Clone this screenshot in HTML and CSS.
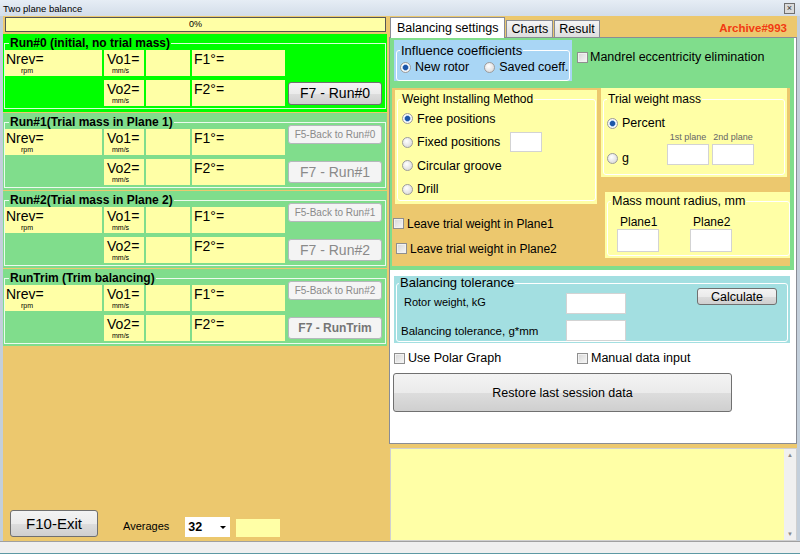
FILE: index.html
```html
<!DOCTYPE HTML>
<html>
<head>
    <meta charset="utf-8">
    <link rel="stylesheet" href="styles.css">
</head>
<body>
<div class="window">
    <div class="titlebar">
        <span>Two plane balance</span>
        <span class="close">×</span>
    </div>

    <div class="main">
        <div class="left">
            <div class="progress">0%</div>

            <div class="run run-current">
                <fieldset>
                    <legend>Run#0 (initial, no trial mass)</legend>
                    <div class="run-grid">
                        <div class="cell nrev">Nrev=<small>rpm</small></div>
                        <div class="cell amp">Vo1=<small>mm/s</small></div>
                        <div class="cell"></div>
                        <div class="cell phase">F1°=</div>
                        <div class="blank"></div>
                        <div class="blank"></div>
                        <div class="cell amp">Vo2=<small>mm/s</small></div>
                        <div class="cell"></div>
                        <div class="cell phase">F2°=</div>
                        <button class="btn btn-run">F7 - Run#0</button>
                    </div>
                </fieldset>
            </div>

            <div class="run">
                <fieldset>
                    <legend>Run#1(Trial mass in Plane 1)</legend>
                    <div class="run-grid">
                        <div class="cell nrev">Nrev=<small>rpm</small></div>
                        <div class="cell amp">Vo1=<small>mm/s</small></div>
                        <div class="cell"></div>
                        <div class="cell phase">F1°=</div>
                        <button class="btn btn-off btn-back">F5-Back to Run#0</button>
                        <div class="blank"></div>
                        <div class="cell amp">Vo2=<small>mm/s</small></div>
                        <div class="cell"></div>
                        <div class="cell phase">F2°=</div>
                        <button class="btn btn-off btn-run">F7 - Run#1</button>
                    </div>
                </fieldset>
            </div>

            <div class="run">
                <fieldset>
                    <legend>Run#2(Trial mass in Plane 2)</legend>
                    <div class="run-grid">
                        <div class="cell nrev">Nrev=<small>rpm</small></div>
                        <div class="cell amp">Vo1=<small>mm/s</small></div>
                        <div class="cell"></div>
                        <div class="cell phase">F1°=</div>
                        <button class="btn btn-off btn-back">F5-Back to Run#1</button>
                        <div class="blank"></div>
                        <div class="cell amp">Vo2=<small>mm/s</small></div>
                        <div class="cell"></div>
                        <div class="cell phase">F2°=</div>
                        <button class="btn btn-off btn-run">F7 - Run#2</button>
                    </div>
                </fieldset>
            </div>

            <div class="run">
                <fieldset>
                    <legend>RunTrim (Trim balancing)</legend>
                    <div class="run-grid">
                        <div class="cell nrev">Nrev=<small>rpm</small></div>
                        <div class="cell amp">Vo1=<small>mm/s</small></div>
                        <div class="cell"></div>
                        <div class="cell phase">F1°=</div>
                        <button class="btn btn-off btn-back">F5-Back to Run#2</button>
                        <div class="blank"></div>
                        <div class="cell amp">Vo2=<small>mm/s</small></div>
                        <div class="cell"></div>
                        <div class="cell phase">F2°=</div>
                        <button class="btn btn-off btn-run btn-trim">F7 - RunTrim</button>
                    </div>
                </fieldset>
            </div>

            <div class="left-footer">
                <button class="btn exit">F10-Exit</button>
                <span class="avg-label">Averages</span>
                <div class="avg-select"><span>32</span><span class="arrow"></span></div>
                <div class="avg-extra"></div>
            </div>
        </div>

        <div class="right">
            <div class="tabs">
                <div class="tab active">Balancing settings</div>
                <div class="tab">Charts</div>
                <div class="tab">Result</div>
                <div class="archive">Archive#993</div>
            </div>

            <div class="tab-page">
                <div class="settings">
                    <div class="settings-top">
                        <div class="box influence">
                            <fieldset>
                                <legend>Influence coefficients</legend>
                                <div class="opt-row">
                                    <label class="opt"><span class="radio on"></span>New rotor</label>
                                    <label class="opt"><span class="radio"></span>Saved coeff.</label>
                                </div>
                            </fieldset>
                        </div>
                        <label class="chk mandrel"><span class="check"></span>Mandrel eccentricity elimination</label>
                    </div>

                    <div class="weights">
                        <div class="weights-left">
                            <div class="box method">
                                <fieldset>
                                    <legend>Weight Installing Method</legend>
                                    <div class="opt-list">
                                        <label class="opt"><span class="radio on"></span>Free positions</label>
                                        <label class="opt"><span class="radio"></span>Fixed positions<input class="field fixed-input" type="text"></label>
                                        <label class="opt"><span class="radio"></span>Circular groove</label>
                                        <label class="opt"><span class="radio"></span>Drill</label>
                                    </div>
                                </fieldset>
                            </div>
                            <label class="chk leave leave1"><span class="check"></span>Leave trial weight in Plane1</label>
                            <label class="chk leave leave2"><span class="check"></span>Leave trial weight in Plane2</label>
                        </div>

                        <div class="weights-right">
                            <div class="box trial">
                                <fieldset>
                                    <legend>Trial weight mass</legend>
                                    <label class="opt opt-percent"><span class="radio on"></span>Percent</label>
                                    <div class="trial-row">
                                        <label class="opt"><span class="radio"></span>g</label>
                                        <div class="plane-inputs">
                                            <div class="plane-col"><span>1st plane</span><input class="field" type="text"></div>
                                            <div class="plane-col"><span>2nd plane</span><input class="field" type="text"></div>
                                        </div>
                                    </div>
                                </fieldset>
                            </div>

                            <div class="box radius">
                                <fieldset>
                                    <legend>Mass mount radius, mm</legend>
                                    <div class="radius-cols">
                                        <div class="radius-col"><span>Plane1</span><input class="field" type="text"></div>
                                        <div class="radius-col"><span>Plane2</span><input class="field" type="text"></div>
                                    </div>
                                </fieldset>
                            </div>
                        </div>
                    </div>
                </div>

                <div class="box tolerance">
                    <fieldset>
                        <legend>Balancing tolerance</legend>
                        <div class="tol-grid">
                            <span class="tol-label tol-label1">Rotor weight, kG</span>
                            <input class="field" type="text">
                            <span></span>
                            <button class="btn calc">Calculate</button>
                            <span class="tol-label tol-label2">Balancing tolerance, g*mm</span>
                            <input class="field" type="text">
                        </div>
                    </fieldset>
                </div>

                <div class="options">
                    <label class="chk polar"><span class="check"></span>Use Polar Graph</label>
                    <label class="chk"><span class="check"></span>Manual data input</label>
                </div>

                <button class="btn restore">Restore last session data</button>
            </div>

            <div class="memo">
                <div class="memo-text"></div>
                <div class="scrollbar"><span>▲</span><span>▼</span></div>
            </div>
        </div>
    </div>

    <div class="statusbar"></div>
</div>
</body>
</html>
```

FILE: styles.css
```css
html, body {
    margin: 0;
    padding: 0;
}

body {
    width: 800px;
    height: 554px;
    overflow: hidden;
    font-family: "Liberation Sans", Arial, sans-serif;
    font-size: 12px;
    color: #000;
    background: #ecc86e;
}

.window {
    width: 800px;
    height: 554px;
    display: flex;
    flex-direction: column;
}

.titlebar {
    height: 16px;
    flex: none;
    display: flex;
    align-items: center;
    justify-content: space-between;
    padding: 0 5px 0 3px;
    background: linear-gradient(#e6edf5, #d3dde9);
    font-size: 9.5px;
    box-sizing: border-box;
}

.close {
    width: 9px;
    height: 9px;
    border: 1px solid #6f6f6f;
    background: #dadada;
    font-size: 9px;
    line-height: 8px;
    text-align: center;
    color: #333;
}

.main {
    flex: 1;
    min-height: 0;
    display: flex;
    background: #ecc86e;
    border-left: 3px solid #c3cfdb;
    border-right: 3px solid #c3cfdb;
}

.statusbar {
    height: 13px;
    flex: none;
    background: #efefef;
    border-top: 1px solid #a0a0a0;
    border-bottom: 1px solid #5d98a3;
    box-sizing: border-box;
}

/* buttons */
.btn {
    font-family: inherit;
    padding: 0;
    border: 1px solid #707070;
    border-radius: 3px;
    background: linear-gradient(#f3f3f3 0%, #ebebeb 50%, #dddddd 51%, #cfcfcf 100%);
    color: #000;
    box-sizing: border-box;
    cursor: default;
}

.btn-off {
    border-color: #b4b8bb;
    background: #f4f4f4;
    color: #8a8a8a;
}

/* left side */
.left {
    width: 384px;
    display: flex;
    flex-direction: column;
}

.progress {
    height: 15px;
    margin: 1px 1px 2px 2px;
    border: 1px solid #555;
    background: #ffffa6;
    font-size: 9px;
    line-height: 13px;
    text-align: center;
    box-sizing: border-box;
}

.run {
    height: 77px;
    margin-bottom: 1px;
    background: #80dd8c;
    box-sizing: border-box;
    padding-top: 2px;
}

.run-current {
    height: 78px;
    background: #00ff00;
}

.run fieldset {
    margin: 0 1px 0 1px;
    padding: 0 0 2px;
    border: 1px solid rgba(255, 255, 255, 0.85);
    min-width: 0;
}

.run legend {
    font-weight: bold;
    font-size: 12px;
    line-height: 14px;
    padding: 0 1px;
    margin-left: 4px;
}

.run-grid {
    display: grid;
    grid-template-columns: 97px 40px 44px 93px 95px;
    grid-template-rows: 26px 26px;
    gap: 4px 2px;
}

.cell {
    background: #ffffa6;
    font-size: 14px;
    line-height: 15px;
    padding: 2px 0 0 1px;
    box-sizing: border-box;
}

.cell small {
    display: block;
    font-size: 7px;
    line-height: 8px;
    padding-left: 15px;
}

.cell.amp {
    padding-left: 3px;
}

.cell.amp small {
    padding-left: 5px;
}

.cell.phase {
    padding-left: 2px;
}

.btn-back {
    grid-column: 5;
    grid-row: 1;
    align-self: start;
    width: 94px;
    height: 19px;
    margin: -4px 0 0 1px;
    font-size: 10px;
}

.btn-run {
    grid-column: 5;
    grid-row: 2;
    align-self: center;
    width: 94px;
    height: 22px;
    margin-left: 1px;
    font-size: 14px;
}

.run-current .btn-run {
    height: 23px;
}

.btn-trim {
    font-size: 12px;
    font-weight: bold;
    color: #757575;
}

.left-footer {
    margin-top: auto;
    display: flex;
    align-items: flex-end;
    padding: 0 0 4px 7px;
}

.exit {
    width: 88px;
    height: 27px;
    font-size: 15px;
}

.avg-label {
    margin: 0 0 5px 25px;
    font-size: 11px;
}

.avg-select {
    width: 45px;
    height: 20px;
    margin-left: 16px;
    padding: 0 4px 0 3px;
    display: flex;
    align-items: center;
    justify-content: space-between;
    background: #fff;
    font-weight: bold;
    font-size: 12.5px;
    box-sizing: border-box;
}

.arrow {
    border-left: 3px solid transparent;
    border-right: 3px solid transparent;
    border-top: 3px solid #000;
}

.avg-extra {
    width: 44px;
    height: 18px;
    margin-left: 6px;
    background: #ffffa6;
}

/* right side */
.right {
    width: 409px;
    margin-left: 1px;
    display: flex;
    flex-direction: column;
}

.tabs {
    height: 21px;
    flex: none;
    display: flex;
    align-items: flex-end;
    padding-left: 2px;
}

.tab {
    height: 17px;
    padding: 0 4px;
    margin-right: 1px;
    border: 1px solid #898c95;
    border-bottom: 0;
    background: linear-gradient(#f4f4f4, #dedede);
    font-size: 12.5px;
    line-height: 17px;
    box-sizing: border-box;
}

.tab.active {
    height: 21px;
    line-height: 20px;
    padding: 0 6px;
    margin-bottom: -1px;
    background: #fff;
    position: relative;
    z-index: 1;
}

.archive {
    margin-left: auto;
    align-self: center;
    padding: 2px 10px 0 0;
    font-weight: bold;
    font-size: 11.5px;
    color: #f23b12;
}

.tab-page {
    height: 407px;
    flex: none;
    margin-left: 1px;
    border: 1px solid #898c95;
    background: #fff;
    box-sizing: border-box;
    display: flex;
    flex-direction: column;
}

.settings {
    height: 232px;
    flex: none;
    margin-right: 2px;
    padding: 0 4px 4px 2px;
    background: #80dd8c;
    box-sizing: border-box;
}

.settings-top {
    height: 48px;
    display: flex;
    align-items: flex-start;
    padding-left: 2px;
}

/* group boxes */
.box {
    box-sizing: border-box;
}

.box fieldset {
    margin: 0;
    padding: 0;
    height: 100%;
    min-width: 0;
    border: 1px solid #fff;
    border-radius: 3px;
    box-sizing: border-box;
}

.box legend {
    padding: 0 1px;
    margin-left: 3px;
    font-size: 12px;
    line-height: 14px;
}

.opt {
    display: flex;
    align-items: center;
    gap: 4px;
    font-size: 12.5px;
}

.radio {
    width: 11px;
    height: 11px;
    flex: none;
    border-radius: 50%;
    border: 1px solid #9c9c9c;
    background: radial-gradient(circle at 40% 35%, #ffffff, #d2d2d2);
    box-sizing: border-box;
}

.radio.on {
    background: radial-gradient(circle, #1d56a8 0 2.2px, #8fb8e6 2.8px, #ffffff 3.6px, #d8d8d8 100%);
}

.chk {
    display: flex;
    align-items: center;
    gap: 3px;
}

.check {
    width: 11px;
    height: 11px;
    flex: none;
    border: 1px solid #8f8f8f;
    background: linear-gradient(135deg, #d6d6d6, #f7f7f7);
    box-shadow: inset 0 0 0 1px #f1f1f1;
    box-sizing: border-box;
}

.field {
    margin: 0;
    padding: 0;
    border: 1px solid #d3d3d3;
    background: #fff;
    box-sizing: border-box;
    font-family: inherit;
}

.influence {
    width: 178px;
    height: 41px;
    margin-top: 2px;
    padding: 3px 2px 0;
    background: #a9d6f5;
}

.influence legend {
    font-size: 13px;
    line-height: 15px;
}

.opt-row {
    display: flex;
    gap: 15px;
    height: 18px;
    padding-left: 3px;
    white-space: nowrap;
    overflow: hidden;
}

.mandrel {
    margin: 12px 0 0 5px;
    gap: 2px;
    font-size: 12.5px;
}

.weights {
    height: 178px;
    margin-top: 2px;
    display: flex;
    background: #ecc86e;
}

.weights-left {
    width: 202px;
    margin-left: 3px;
}

.weights-right {
    width: 189px;
    margin-left: 4px;
}

.method {
    height: 114px;
    margin-top: 2px;
    padding: 2px 1px 3px 2px;
    background: #ffffa6;
}

.opt-list {
    padding: 1px 0 0 4px;
}

.opt-list .opt {
    height: 23.5px;
}

.fixed-input {
    width: 32px;
    height: 20px;
    margin-left: 6px;
}

.leave {
    height: 25px;
    font-size: 12px;
}

.leave1 {
    margin: 7px 0 0 -2px;
}

.leave2 {
    margin-left: 1px;
}

.trial {
    width: 186px;
    height: 89px;
    padding: 4px 2px 2px 2px;
    background: #ffffa6;
}

.opt-percent {
    height: 20px;
    margin-top: 7px;
    padding-left: 3px;
}

.trial-row {
    display: flex;
    align-items: flex-end;
}

.trial-row .opt {
    width: 63px;
    height: 14px;
    padding-left: 3px;
    box-sizing: border-box;
}

.plane-inputs {
    display: flex;
    gap: 3px;
}

.plane-col {
    display: flex;
    flex-direction: column;
    align-items: center;
}

.plane-col span {
    font-size: 9px;
    line-height: 9px;
    margin-bottom: 2px;
    color: #666;
}

.plane-col .field {
    width: 42px;
    height: 21px;
}

.radius {
    width: 185px;
    height: 66px;
    margin: 15px 0 0 4px;
    padding: 2px 0 2px 2px;
    background: #ffffa6;
}

.radius legend {
    font-size: 12.5px;
}

.radius-cols {
    display: flex;
    gap: 31px;
    padding: 7px 0 0 9px;
}

.radius-col span {
    display: block;
    padding-left: 3px;
    font-size: 12px;
    line-height: 14px;
}

.radius-col .field {
    display: block;
    width: 42px;
    height: 23px;
}

.tolerance {
    height: 67px;
    flex: none;
    margin: 6px 6px 0 4px;
    padding: 0 2px 1px 2px;
    background: #a3dfe1;
}

.tolerance legend {
    margin-left: 2px;
    font-size: 13px;
}

.tol-grid {
    display: grid;
    grid-template-columns: 169px 60px 71px 80px;
    grid-template-rows: 24px 21px;
    row-gap: 5px;
    margin-top: 1px;
}

.tol-grid .field {
    width: 60px;
    height: 21px;
    align-self: center;
}

.tol-label1 {
    align-self: start;
    margin-top: 4px;
    padding-left: 7px;
    font-size: 11px;
    line-height: 14px;
}

.tol-label2 {
    align-self: center;
    padding-left: 4px;
    font-size: 11.5px;
}

.calc {
    grid-column: 4;
    grid-row: 1;
    align-self: start;
    height: 17px;
    margin-top: -3px;
    font-size: 12.5px;
}

.options {
    height: 14px;
    margin: 8px 0 0 4px;
    display: flex;
    align-items: center;
    font-size: 12.5px;
}

.polar {
    width: 183px;
}

.restore {
    width: 339px;
    height: 39px;
    margin: 8px 0 0 3px;
    font-size: 12.5px;
}

.memo {
    height: 93px;
    flex: none;
    margin: 4px 0 0 2px;
    display: flex;
    border: 1px solid #d0d0d0;
    background: #ffffa6;
    box-sizing: border-box;
}

.memo-text {
    flex: 1;
}

.scrollbar {
    width: 12px;
    padding: 3px 0;
    display: flex;
    flex-direction: column;
    justify-content: space-between;
    align-items: center;
    background: #f0f0f0;
    font-size: 6px;
    color: #888;
}
```
